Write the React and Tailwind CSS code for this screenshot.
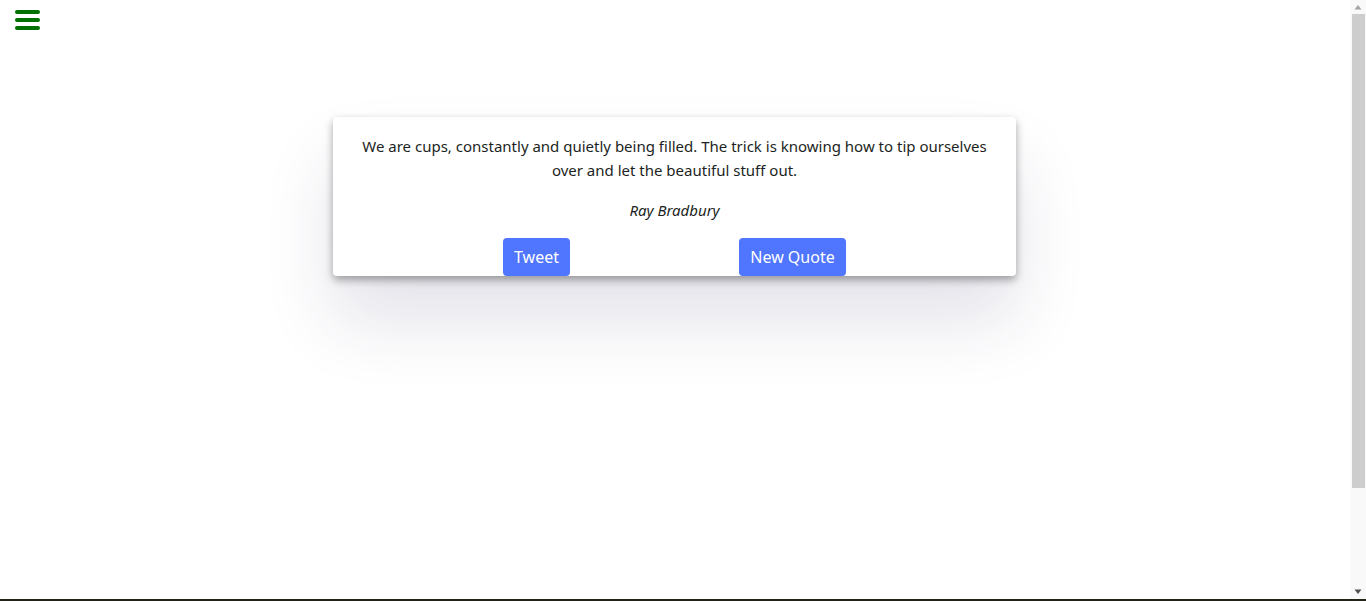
function Hamburger() {
  return (
    <button type="button" className="flex w-[25px] flex-col gap-[4.5px]">
      <span className="block h-[3.5px] w-full rounded-full bg-[#037003]" />
      <span className="block h-[3.5px] w-full rounded-full bg-[#037003]" />
      <span className="block h-[3.5px] w-full rounded-full bg-[#037003]" />
    </button>
  )
}

function Scrollbar() {
  return (
    <div className="flex w-4 flex-col items-center bg-[#f9f9f9]">
      <svg width="16" height="14" viewBox="0 0 16 14" className="shrink-0">
        <path d="M4.5 9.5 L8 5 L11.5 9.5 Z" fill="#a3a3a3" />
      </svg>
      <div className="h-[474px] w-[13px] shrink-0 bg-[#cdcdcd]" />
      <div className="flex-1" />
      <svg width="16" height="14" viewBox="0 0 16 14" className="shrink-0">
        <path d="M4.5 4.5 L11.5 4.5 L8 9 Z" fill="#505050" />
      </svg>
    </div>
  )
}

export default function App() {
  return (
    <div className="flex h-[601px] flex-col overflow-hidden bg-white font-['Noto_Sans',sans-serif] text-[#1c1f23]">
      <div className="flex min-h-0 flex-1">
        <main className="flex-1">
          <div className="pl-[15px] pt-[10px]">
            <Hamburger />
          </div>

          <div className="flex justify-center pt-[87px] pr-px">
            <div className="w-[683px] rounded-[4px] bg-white px-6 pt-[17px] text-center shadow-[0_4px_8px_rgba(0,0,0,0.35),0_45px_70px_rgba(40,40,90,0.13)]">
              <p className="text-[15px] leading-6">
                We are cups, constantly and quietly being filled. The trick is knowing how to tip ourselves over and let the beautiful stuff out.
              </p>
              <p className="mt-4 text-[15px] leading-6 italic">Ray Bradbury</p>
              <div className="mt-[16px] flex justify-center gap-[169px]">
                <button type="button" className="h-[38px] w-[67px] rounded-[4px] bg-[#5075ff] text-[16px] text-white">
                  Tweet
                </button>
                <button type="button" className="h-[38px] w-[107px] rounded-[4px] bg-[#5075ff] text-[16px] text-white">
                  New Quote
                </button>
              </div>
            </div>
          </div>
        </main>
        <Scrollbar />
      </div>

      <div className="h-[2px] shrink-0 bg-[#222218]" />
    </div>
  )
}
